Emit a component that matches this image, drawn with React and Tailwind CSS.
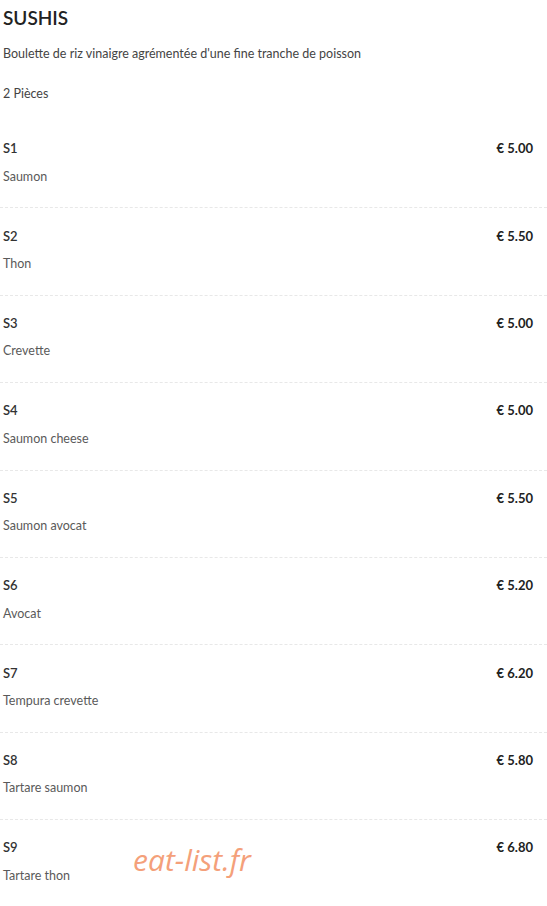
const items = [
  { code: 'S1', name: 'Saumon', price: '€ 5.00' },
  { code: 'S2', name: 'Thon', price: '€ 5.50' },
  { code: 'S3', name: 'Crevette', price: '€ 5.00' },
  { code: 'S4', name: 'Saumon cheese', price: '€ 5.00' },
  { code: 'S5', name: 'Saumon avocat', price: '€ 5.50' },
  { code: 'S6', name: 'Avocat', price: '€ 5.20' },
  { code: 'S7', name: 'Tempura crevette', price: '€ 6.20' },
  { code: 'S8', name: 'Tartare saumon', price: '€ 5.80' },
  { code: 'S9', name: 'Tartare thon', price: '€ 6.80' }
]

const App = () => {
  return (
    <div className="relative w-[547px] bg-white font-['Lato',sans-serif]">
      <div className="pl-[3px] pr-[14px]">
        <h1 className="pt-[6px] text-[19px] leading-[24px] font-semibold text-[#222]">
          SUSHIS
        </h1>

        <p className="mt-[16px] text-[12.5px] leading-[16px] text-[#444]">
          Boulette de riz vinaigre agrémentée d'une fine tranche de poisson
        </p>

        <p className="mt-[24px] text-[12.5px] leading-[16px] text-[#444]">
          2 Pièces
        </p>
      </div>

      <div className="mt-[19px] border-b border-[#e6e6e6]">
        {items.map((item, i) => (
          <div
            key={item.code}
            className={
              i < items.length - 1
                ? 'pl-[3px] pr-[14px] pt-[20px] pb-[22.4px] border-b border-dashed border-[#e8e8e8]'
                : 'pl-[3px] pr-[14px] pt-[20px] pb-[22.4px]'
            }
          >
            <div className="flex justify-between items-center h-[16px]">
              <span className="text-[13px] font-semibold text-[#333]">
                {item.code}
              </span>
              <span className="text-[13px] font-bold text-[#222]">
                {item.price}
              </span>
            </div>
            <div className="mt-[12px] h-[16px] flex items-center text-[12.5px] text-[#5a5a5a]">
              {item.name}
            </div>
          </div>
        ))}
      </div>

      <div className="absolute left-[133px] top-[842px] text-[30px] italic text-[#f4a07a] font-['Open_Sans',sans-serif] leading-[36px]">
        eat-list.fr
      </div>
    </div>
  )
}

export default App
